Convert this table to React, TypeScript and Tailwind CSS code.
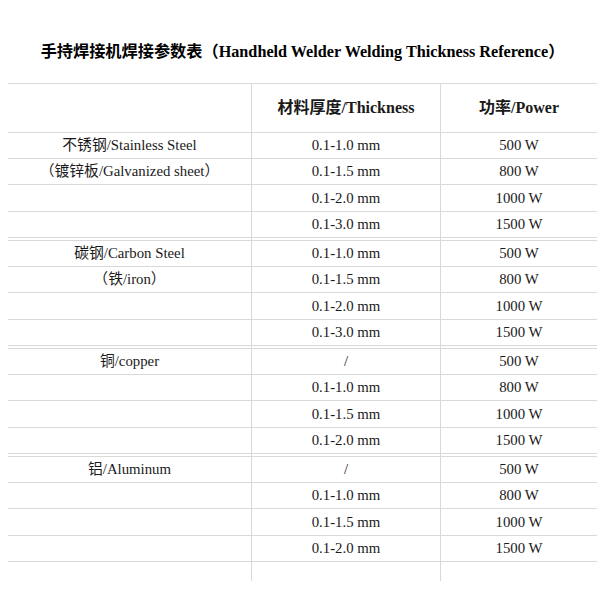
const groups = [
  {
    labels: ["不锈钢/Stainless Steel", "（镀锌板/Galvanized sheet）"],
    rows: [
      ["0.1-1.0 mm", "500 W"],
      ["0.1-1.5 mm", "800 W"],
      ["0.1-2.0 mm", "1000 W"],
      ["0.1-3.0 mm", "1500 W"],
    ],
  },
  {
    labels: ["碳钢/Carbon Steel", "（铁/iron）"],
    rows: [
      ["0.1-1.0 mm", "500 W"],
      ["0.1-1.5 mm", "800 W"],
      ["0.1-2.0 mm", "1000 W"],
      ["0.1-3.0 mm", "1500 W"],
    ],
  },
  {
    labels: ["铜/copper"],
    rows: [
      ["/", "500 W"],
      ["0.1-1.0 mm", "800 W"],
      ["0.1-1.5 mm", "1000 W"],
      ["0.1-2.0 mm", "1500 W"],
    ],
  },
  {
    labels: ["铝/Aluminum"],
    rows: [
      ["/", "500 W"],
      ["0.1-1.0 mm", "800 W"],
      ["0.1-1.5 mm", "1000 W"],
      ["0.1-2.0 mm", "1500 W"],
    ],
  },
];

// row heights per group so lines land on the reference pitch (26/26/27/26)
const rowHeights = ["h-[26px]", "h-[26px]", "h-[27px]", "h-[26px]"];

const font = "font-['Liberation_Serif','Noto_Sans_CJK_SC',serif]";

const Row = ({ cells, h }: { cells: string[]; h: string }) => (
  <div className={`grid grid-cols-[244px_189px_156px] ${h}`}>
    <div className="flex items-center justify-center border-b border-r border-[#d9d9d9]">
      {cells[0]}
    </div>
    <div className="flex items-center justify-center border-b border-r border-[#d9d9d9]">
      {cells[1]}
    </div>
    <div className="flex items-center justify-center border-b border-[#d9d9d9]">
      {cells[2]}
    </div>
  </div>
);

export default function App() {
  return (
    <div className={`h-[605px] w-[605px] bg-white text-[#1a1a1a] ${font}`}>
      <h1 className="pt-[40px] text-center text-[16.2px] font-bold leading-[24px] text-black">
        手持焊接机焊接参数表（Handheld Welder Welding Thickness Reference）
      </h1>

      <div className="ml-[8px] mt-[19px] w-[589px] text-[14.8px]">
        {/* header */}
        <div className="grid h-[50px] grid-cols-[244px_189px_156px] border-t border-[#d9d9d9] text-[16px] font-bold">
          <div className="border-b border-r border-[#d9d9d9]" />
          <div className="flex items-center justify-center border-b border-r border-[#d9d9d9]">
            材料厚度/Thickness
          </div>
          <div className="flex items-center justify-center border-b border-[#d9d9d9]">
            功率/Power
          </div>
        </div>

        {groups.map((g, gi) => (
          <div key={gi}>
            {gi > 0 && <Row cells={["", "", ""]} h="h-[3px]" />}
            {g.rows.map((r, ri) => (
              <Row
                key={ri}
                h={rowHeights[ri]}
                cells={[g.labels[ri] ?? "", r[0], r[1]]}
              />
            ))}
          </div>
        ))}

        {/* trailing empty row */}
        <div className="grid h-[19px] grid-cols-[244px_189px_156px]">
          <div className="border-r border-[#d9d9d9]" />
          <div className="border-r border-[#d9d9d9]" />
          <div />
        </div>
      </div>
    </div>
  );
}
